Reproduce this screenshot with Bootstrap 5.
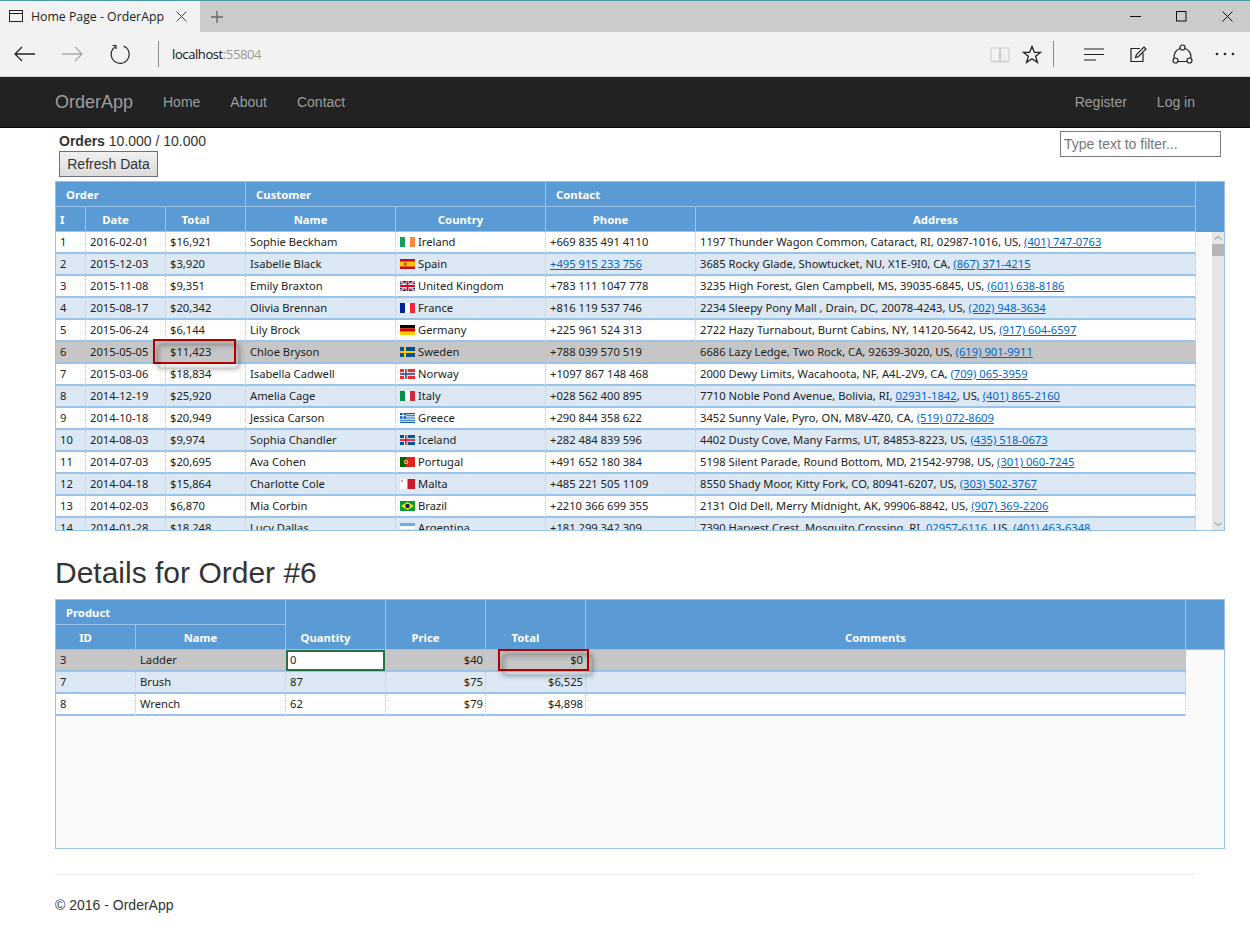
<!DOCTYPE html>
<html lang="en">
<head>
<meta charset="utf-8">
<title>Home Page - OrderApp</title>
<link href="https://cdn.jsdelivr.net/npm/bootstrap@5.3.0/dist/css/bootstrap.min.css" rel="stylesheet">
<style>
html,body{height:951px;overflow:hidden}
body{font-family:"Liberation Sans",Arial,sans-serif;font-size:14px;color:#333;background:#fff;line-height:20px}
.tabstrip{height:32px;background:#cbcbcb;border-top:1px solid #4a97a8}
.edge-tab{width:200px;background:#f2f2f2;font-family:"Open Sans",sans-serif;font-size:12.3px;color:#222;padding-left:9px}
.edge-tab .tt{margin-left:7px;width:145px;white-space:nowrap}
.plus{margin-left:11px}
.win-btns{gap:35px;padding-right:17px}
.toolbar{height:45px;background:#f2f2f2;border-bottom:1px solid #d4d4d4;padding:0 15px 0 14px}
.tb-sep{width:1px;height:26px;background:#8a8a8a}
.addr{font-family:"Open Sans",sans-serif;font-size:13px;color:#111;letter-spacing:-.4px}
.addr span{color:#999}
.appbar{height:51px;background:#222;border-bottom:1px solid #080808;padding:0 55px 0 55px;color:#9d9d9d}
.brandname{font-size:18px;color:#9d9d9d;width:108px}
.navlink{color:#9d9d9d;text-decoration:none;margin-right:30px}
.navlink.last{margin-right:0}
.toparea{height:53px;padding:3px 4px 0 4px;margin:0 25px 0 55px}
.refresh{height:26px;width:99px;padding:0;font-size:14px;color:#333;border:1px solid #707070;border-radius:0;background:linear-gradient(#f0f0f0,#dcdcdc);line-height:22px;display:block;margin-top:0}
.filter{width:161px;height:26px;margin-top:0;border:1px solid #767676;padding:0 3px;font-size:14px;font-family:"Liberation Sans",sans-serif;color:#333;display:block}
.filter::placeholder{color:#757575;opacity:1}
.wj{margin:0 25px 0 55px;border:1px solid #9ac3ea;font-family:"Noto Sans",sans-serif;font-size:11.2px;color:#222;position:relative;overflow:hidden}
.wj table{table-layout:fixed;border-collapse:separate;border-spacing:0}
.hd{background:#5b9bd5;color:#fff;font-weight:700;font-size:11.3px;width:100%}
.hd th{border-right:1px solid #9ac3ea;border-bottom:1px solid #9ac3ea;text-align:center;vertical-align:middle;padding:2px 22px 0 2px;height:25px;line-height:14px}
.hd th.grp{text-align:left;padding-left:10px}
.hd th.bot{vertical-align:bottom;padding-bottom:4px}
.hd th.no-r{border-right:0}
.hd th.lft{text-align:left;padding-left:4px}
.wj-body{height:298px;background:#fafafa}
.scroller{height:298px;overflow:hidden;position:relative}
.dt td{height:22px;padding:0 3px 0 4px;white-space:nowrap;overflow:hidden;border-right:1px dotted #a9cdef;border-bottom:2px solid #9ac3ea;line-height:18px;background:#fff}
.dt tr:nth-child(even) td{background:#dce9f5}
.dt tr.picked td{background:#c6c6c6!important;border-right-color:#c6c6c6}
.dt td.num{text-align:right;padding-right:2px}
.dt a{color:#06c;text-decoration:underline}
.dt svg{width:15px;height:10px;vertical-align:-1px;margin-right:3px}
.spacer{width:16px;background:#fafafa;flex:none}
.sbar{width:12px;flex:none;background:#e6e6e6;padding-top:0}
.sbar .up,.sbar .dn{height:12px;display:block;width:12px}
.sbar .thumb{height:12px;background:#b5b5b5}
.ring{position:absolute;border:2px solid #b80000;z-index:3;pointer-events:none}
.ring::after{content:"";position:absolute;left:3px;top:4px;right:-5px;bottom:-6px;box-shadow:0 0 6px rgba(0,0,0,.45),inset 0 0 6px rgba(0,0,0,.32)}
.ring-a{left:97px;top:107px;width:83px;height:25px}
.ring-b{left:442px;top:49px;width:91px;height:22px}
.dettitle{font-size:30px;font-weight:500;line-height:36px;margin:24px 0 8px 55px;color:#333}
.wj-det{height:250px;background:#fafafa}
.hd.det{width:100%}
.qty{display:block;height:21px;margin:0 -3px -1px -4px;border:2px solid #217346;background:#fff;padding:0 2px;line-height:16px}
.dt td.qc{padding:0 3px 0 4px;overflow:visible}
.foot-line{margin:25px 55px 0 55px;border-top:1px solid #eee;height:0}
.foot{margin:20px 0 0 55px;color:#333}
</style>
</head>
<body>
<svg width="0" height="0" class="position-absolute">
<defs>
<symbol id="f-ie" viewBox="0 0 15 10"><rect width="5" height="10" fill="#169b62"/><rect x="5" width="5" height="10" fill="#fff"/><rect x="10" width="5" height="10" fill="#ff883e"/></symbol>
<symbol id="f-es" viewBox="0 0 15 10"><rect width="15" height="10" fill="#c60b1e"/><rect y="2.5" width="15" height="5" fill="#ffc400"/><rect x="4" y="3.5" width="2.5" height="3" fill="#a0561d"/></symbol>
<symbol id="f-uk" viewBox="0 0 15 10"><rect width="15" height="10" fill="#012169"/><path d="M0 0L15 10M15 0L0 10" stroke="#fff" stroke-width="2"/><path d="M0 0L15 10M15 0L0 10" stroke="#c8102e" stroke-width=".8"/><path d="M7.5 0V10M0 5H15" stroke="#fff" stroke-width="3.4"/><path d="M7.5 0V10M0 5H15" stroke="#c8102e" stroke-width="2"/></symbol>
<symbol id="f-fr" viewBox="0 0 15 10"><rect width="5" height="10" fill="#002395"/><rect x="5" width="5" height="10" fill="#fff"/><rect x="10" width="5" height="10" fill="#ed2939"/></symbol>
<symbol id="f-de" viewBox="0 0 15 10"><rect width="15" height="3.4" fill="#000"/><rect y="3.4" width="15" height="3.3" fill="#d00"/><rect y="6.7" width="15" height="3.3" fill="#ffce00"/></symbol>
<symbol id="f-se" viewBox="0 0 15 10"><rect width="15" height="10" fill="#005293"/><rect x="4" width="2" height="10" fill="#fecb00"/><rect y="4" width="15" height="2" fill="#fecb00"/></symbol>
<symbol id="f-no" viewBox="0 0 15 10"><rect width="15" height="10" fill="#ef2b2d"/><rect x="4" width="3.6" height="10" fill="#fff"/><rect y="3.2" width="15" height="3.6" fill="#fff"/><rect x="5" width="1.7" height="10" fill="#3d5a98"/><rect y="4.1" width="15" height="1.8" fill="#3d5a98"/></symbol>
<symbol id="f-it" viewBox="0 0 15 10"><rect width="5" height="10" fill="#009246"/><rect x="5" width="5" height="10" fill="#fff"/><rect x="10" width="5" height="10" fill="#ce2b37"/></symbol>
<symbol id="f-gr" viewBox="0 0 15 10"><rect width="15" height="10" fill="#fff"/><path d="M0 .6H15M0 2.8H15M0 5H15M0 7.2H15M0 9.4H15" stroke="#0d5eaf" stroke-width="1.1"/><rect width="6" height="5.5" fill="#0d5eaf"/><path d="M3 0V5.5M0 2.7H6" stroke="#fff"/></symbol>
<symbol id="f-is" viewBox="0 0 15 10"><rect width="15" height="10" fill="#02529c"/><rect x="4" width="3.6" height="10" fill="#fff"/><rect y="3.2" width="15" height="3.6" fill="#fff"/><rect x="5" width="1.7" height="10" fill="#dc1e35"/><rect y="4.1" width="15" height="1.8" fill="#dc1e35"/></symbol>
<symbol id="f-pt" viewBox="0 0 15 10"><rect width="6" height="10" fill="#060"/><rect x="6" width="9" height="10" fill="#e0261b"/><circle cx="6" cy="5" r="2.2" fill="#d9c46a"/><circle cx="6" cy="5" r="1.1" fill="#a33"/></symbol>
<symbol id="f-mt" viewBox="0 0 15 10"><rect width="7.5" height="10" fill="#fff"/><rect x="7.5" width="7.5" height="10" fill="#cf142b"/><rect x="1" y="1" width="2" height="2" fill="#c9a0a0"/></symbol>
<symbol id="f-br" viewBox="0 0 15 10"><rect width="15" height="10" fill="#009b3a"/><path d="M7.5 1L14 5L7.5 9L1 5Z" fill="#fedf00"/><circle cx="7.5" cy="5" r="2.2" fill="#002776"/></symbol>
<symbol id="f-ar" viewBox="0 0 15 10"><rect width="15" height="3.3" fill="#74acdf"/><rect y="3.3" width="15" height="3.4" fill="#fff"/><rect y="6.7" width="15" height="3.3" fill="#74acdf"/></symbol>
</defs>
</svg>

<div class="tabstrip d-flex justify-content-between">
  <div class="d-flex align-items-stretch">
    <div class="edge-tab d-flex align-items-center">
      <svg width="15" height="13" viewBox="0 0 15 13" fill="none" stroke="#222"><rect x=".5" y=".5" width="13" height="11"/><path d="M.5 3.5H13.5"/></svg>
      <span class="tt">Home Page - OrderApp</span>
      <svg width="11" height="11" viewBox="0 0 11 11" stroke="#444" fill="none"><path d="M.5.5L10.5 10.5M10.5.5L.5 10.5"/></svg>
    </div>
    <svg class="plus align-self-center" width="12" height="12" viewBox="0 0 12 12" stroke="#666" stroke-width="1.3" fill="none"><path d="M6 0V12M0 6H12"/></svg>
  </div>
  <div class="win-btns d-flex align-items-center">
    <svg width="11" height="11" viewBox="0 0 11 11" stroke="#111" fill="none"><path d="M0 5.5H11"/></svg>
    <svg width="11" height="11" viewBox="0 0 11 11" stroke="#111" fill="none"><rect x=".5" y=".5" width="9.5" height="9.5"/></svg>
    <svg width="11" height="11" viewBox="0 0 11 11" stroke="#111" fill="none"><path d="M.5.5L10.5 10.5M10.5.5L.5 10.5"/></svg>
  </div>
</div>
<div class="toolbar d-flex align-items-center">
  <svg width="21" height="16" viewBox="0 0 21 16" fill="none" stroke="#222" stroke-width="1.3"><path d="M21 8H1M8 1L1 8L8 15"/></svg>
  <svg style="margin-left:27px" width="21" height="16" viewBox="0 0 21 16" fill="none" stroke="#aaa" stroke-width="1.3"><path d="M0 8H20M13 1L20 8L13 15"/></svg>
  <svg style="margin-left:27px" width="20" height="20" viewBox="0 0 20 20" fill="none" stroke="#222" stroke-width="1.2"><path d="M5 3A9 9 0 1 0 13.5 2M2.5 1.5H6V5"/></svg>
  <div class="tb-sep" style="margin-left:28px"></div>
  <div class="addr" style="margin-left:13px">localhost<span>:55804</span></div>
  <div class="ms-auto d-flex align-items-center">
    <svg width="20" height="17" viewBox="0 0 20 17" fill="none" stroke="#cfcfcf" stroke-width="1.2"><path d="M1 2H9.5V15H1ZM10.5 2H19V15H10.5Z"/><path d="M1 15.8H19"/></svg>
    <svg style="margin-left:12px" width="20" height="19" viewBox="0 0 20 19" fill="none" stroke="#222" stroke-width="1.3"><path d="M10 1.5L12.4 7.3H18.6L13.6 11.2L15.4 17.4L10 13.8L4.6 17.4L6.4 11.2L1.4 7.3H7.6Z"/></svg>
    <div class="tb-sep" style="margin-left:11px"></div>
    <svg style="margin-left:30px" width="21" height="13" viewBox="0 0 21 13" fill="none" stroke="#222" stroke-width="1.2"><path d="M0 1H20M0 6.5H20M0 12H12"/></svg>
    <svg style="margin-left:25px" width="17" height="17" viewBox="0 0 17 17" fill="none" stroke="#222" stroke-width="1.2"><path d="M13 7V15.5H1V2.5H10"/><path d="M5.5 11.5L6.5 8.5L14 1L16 3L8.5 10.5Z"/></svg>
    <svg style="margin-left:25px" width="21" height="21" viewBox="0 0 21 21" fill="none" stroke="#222" stroke-width="1.2"><circle cx="10.5" cy="3.5" r="2.5"/><circle cx="3.5" cy="16.5" r="2.5"/><circle cx="17.5" cy="16.5" r="2.5"/><path d="M8 4.5A8.5 8.5 0 0 0 2.2 14M13 4.5A8.5 8.5 0 0 1 18.8 14M6 17.5H15"/></svg>
    <svg style="margin-left:22px" width="20" height="4" viewBox="0 0 20 4" fill="#222"><circle cx="2" cy="2" r="1.3"/><circle cx="10" cy="2" r="1.3"/><circle cx="18" cy="2" r="1.3"/></svg>
  </div>
</div>

<nav class="appbar d-flex align-items-center">
  <span class="brandname">OrderApp</span>
  <a class="navlink" href="#">Home</a>
  <a class="navlink" href="#">About</a>
  <a class="navlink" href="#">Contact</a>
  <a class="navlink ms-auto" href="#">Register</a>
  <a class="navlink last" href="#">Log in</a>
</nav>

<div class="toparea d-flex justify-content-between">
  <div>
    <div><b>Orders</b> 10.000 / 10.000</div>
    <button class="refresh" type="button">Refresh Data</button>
  </div>
  <input class="filter" type="text" placeholder="Type text to filter...">
</div>

<div class="wj">
  <table class="hd">
    <colgroup><col style="width:30px"><col style="width:80px"><col style="width:80px"><col style="width:150px"><col style="width:150px"><col style="width:150px"><col style="width:500px"><col></colgroup>
    <tr><th class="grp" colspan="3">Order</th><th class="grp" colspan="2">Customer</th><th class="grp" colspan="2">Contact</th><th class="no-r" rowspan="2" style="border-bottom:0"></th></tr>
    <tr><th class="lft">I</th><th>Date</th><th>Total</th><th>Name</th><th>Country</th><th>Phone</th><th>Address</th></tr>
  </table>
  <div class="wj-body d-flex">
    <div class="scroller">
      <table class="dt" style="width:1140px">
        <colgroup><col style="width:30px"><col style="width:80px"><col style="width:80px"><col style="width:150px"><col style="width:150px"><col style="width:150px"><col style="width:500px"></colgroup>
        <tr><td>1</td><td>2016-02-01</td><td>$16,921</td><td>Sophie Beckham</td><td><svg><use href="#f-ie"/></svg>Ireland</td><td>+669 835 491 4110</td><td>1197 Thunder Wagon Common, Cataract, RI, 02987-1016, US, <a href="#">(401) 747-0763</a></td></tr>
        <tr><td>2</td><td>2015-12-03</td><td>$3,920</td><td>Isabelle Black</td><td><svg><use href="#f-es"/></svg>Spain</td><td><a href="#">+495 915 233 756</a></td><td>3685 Rocky Glade, Showtucket, NU, X1E-9I0, CA, <a href="#">(867) 371-4215</a></td></tr>
        <tr><td>3</td><td>2015-11-08</td><td>$9,351</td><td>Emily Braxton</td><td><svg><use href="#f-uk"/></svg>United Kingdom</td><td>+783 111 1047 778</td><td>3235 High Forest, Glen Campbell, MS, 39035-6845, US, <a href="#">(601) 638-8186</a></td></tr>
        <tr><td>4</td><td>2015-08-17</td><td>$20,342</td><td>Olivia Brennan</td><td><svg><use href="#f-fr"/></svg>France</td><td>+816 119 537 746</td><td>2234 Sleepy Pony Mall , Drain, DC, 20078-4243, US, <a href="#">(202) 948-3634</a></td></tr>
        <tr><td>5</td><td>2015-06-24</td><td>$6,144</td><td>Lily Brock</td><td><svg><use href="#f-de"/></svg>Germany</td><td>+225 961 524 313</td><td>2722 Hazy Turnabout, Burnt Cabins, NY, 14120-5642, US, <a href="#">(917) 604-6597</a></td></tr>
        <tr class="picked"><td>6</td><td>2015-05-05</td><td>$11,423</td><td>Chloe Bryson</td><td><svg><use href="#f-se"/></svg>Sweden</td><td>+788 039 570 519</td><td>6686 Lazy Ledge, Two Rock, CA, 92639-3020, US, <a href="#">(619) 901-9911</a></td></tr>
        <tr><td>7</td><td>2015-03-06</td><td>$18,834</td><td>Isabella Cadwell</td><td><svg><use href="#f-no"/></svg>Norway</td><td>+1097 867 148 468</td><td>2000 Dewy Limits, Wacahoota, NF, A4L-2V9, CA, <a href="#">(709) 065-3959</a></td></tr>
        <tr><td>8</td><td>2014-12-19</td><td>$25,920</td><td>Amelia Cage</td><td><svg><use href="#f-it"/></svg>Italy</td><td>+028 562 400 895</td><td>7710 Noble Pond Avenue, Bolivia, RI, <a href="#">02931-1842</a>, US, <a href="#">(401) 865-2160</a></td></tr>
        <tr><td>9</td><td>2014-10-18</td><td>$20,949</td><td>Jessica Carson</td><td><svg><use href="#f-gr"/></svg>Greece</td><td>+290 844 358 622</td><td>3452 Sunny Vale, Pyro, ON, M8V-4Z0, CA, <a href="#">(519) 072-8609</a></td></tr>
        <tr><td>10</td><td>2014-08-03</td><td>$9,974</td><td>Sophia Chandler</td><td><svg><use href="#f-is"/></svg>Iceland</td><td>+282 484 839 596</td><td>4402 Dusty Cove, Many Farms, UT, 84853-8223, US, <a href="#">(435) 518-0673</a></td></tr>
        <tr><td>11</td><td>2014-07-03</td><td>$20,695</td><td>Ava Cohen</td><td><svg><use href="#f-pt"/></svg>Portugal</td><td>+491 652 180 384</td><td>5198 Silent Parade, Round Bottom, MD, 21542-9798, US, <a href="#">(301) 060-7245</a></td></tr>
        <tr><td>12</td><td>2014-04-18</td><td>$15,864</td><td>Charlotte Cole</td><td><svg><use href="#f-mt"/></svg>Malta</td><td>+485 221 505 1109</td><td>8550 Shady Moor, Kitty Fork, CO, 80941-6207, US, <a href="#">(303) 502-3767</a></td></tr>
        <tr><td>13</td><td>2014-02-03</td><td>$6,870</td><td>Mia Corbin</td><td><svg><use href="#f-br"/></svg>Brazil</td><td>+2210 366 699 355</td><td>2131 Old Dell, Merry Midnight, AK, 99906-8842, US, <a href="#">(907) 369-2206</a></td></tr>
        <tr><td>14</td><td>2014-01-28</td><td>$18,248</td><td>Lucy Dallas</td><td><svg><use href="#f-ar"/></svg>Argentina</td><td>+181 299 342 309</td><td>7390 Harvest Crest, Mosquito Crossing, RI, <a href="#">02957-6116</a>, US, <a href="#">(401) 463-6348</a></td></tr>
      </table>
      <div class="ring ring-a"></div>
    </div>
    <div class="spacer"></div>
    <div class="sbar d-flex flex-column">
      <svg class="up" viewBox="0 0 12 12" fill="none" stroke="#aaa" stroke-width="1.2"><path d="M2.5 7.5L6 4.5L9.5 7.5"/></svg>
      <div class="thumb"></div>
      <svg class="dn mt-auto" viewBox="0 0 12 12" fill="none" stroke="#aaa" stroke-width="1.2"><path d="M2.5 4.5L6 7.5L9.5 4.5"/></svg>
    </div>
  </div>
</div>

<h2 class="dettitle">Details for Order #6</h2>

<div class="wj wj-det">
  <table class="hd det">
    <colgroup><col style="width:80px"><col style="width:150px"><col style="width:100px"><col style="width:100px"><col style="width:100px"><col style="width:600px"><col></colgroup>
    <tr><th class="grp" colspan="2">Product</th><th class="bot" rowspan="2">Quantity</th><th class="bot" rowspan="2">Price</th><th class="bot" rowspan="2">Total</th><th class="bot" rowspan="2">Comments</th><th class="no-r" rowspan="2"></th></tr>
    <tr><th>ID</th><th>Name</th></tr>
  </table>
  <table class="dt" style="width:1130px">
    <colgroup><col style="width:80px"><col style="width:150px"><col style="width:100px"><col style="width:100px"><col style="width:100px"><col style="width:600px"></colgroup>
    <tr class="picked"><td>3</td><td>Ladder</td><td class="qc"><span class="qty">0</span></td><td class="num">$40</td><td class="num">$0</td><td></td></tr>
    <tr class="alt"><td>7</td><td>Brush</td><td>87</td><td class="num">$75</td><td class="num">$6,525</td><td></td></tr>
    <tr><td>8</td><td>Wrench</td><td>62</td><td class="num">$79</td><td class="num">$4,898</td><td></td></tr>
  </table>
  <div class="ring ring-b"></div>
</div>

<div class="foot-line"></div>
<div class="foot">© 2016 - OrderApp</div>
<script src="https://cdn.jsdelivr.net/npm/bootstrap@5.3.0/dist/js/bootstrap.bundle.min.js"></script>
</body>
</html>
